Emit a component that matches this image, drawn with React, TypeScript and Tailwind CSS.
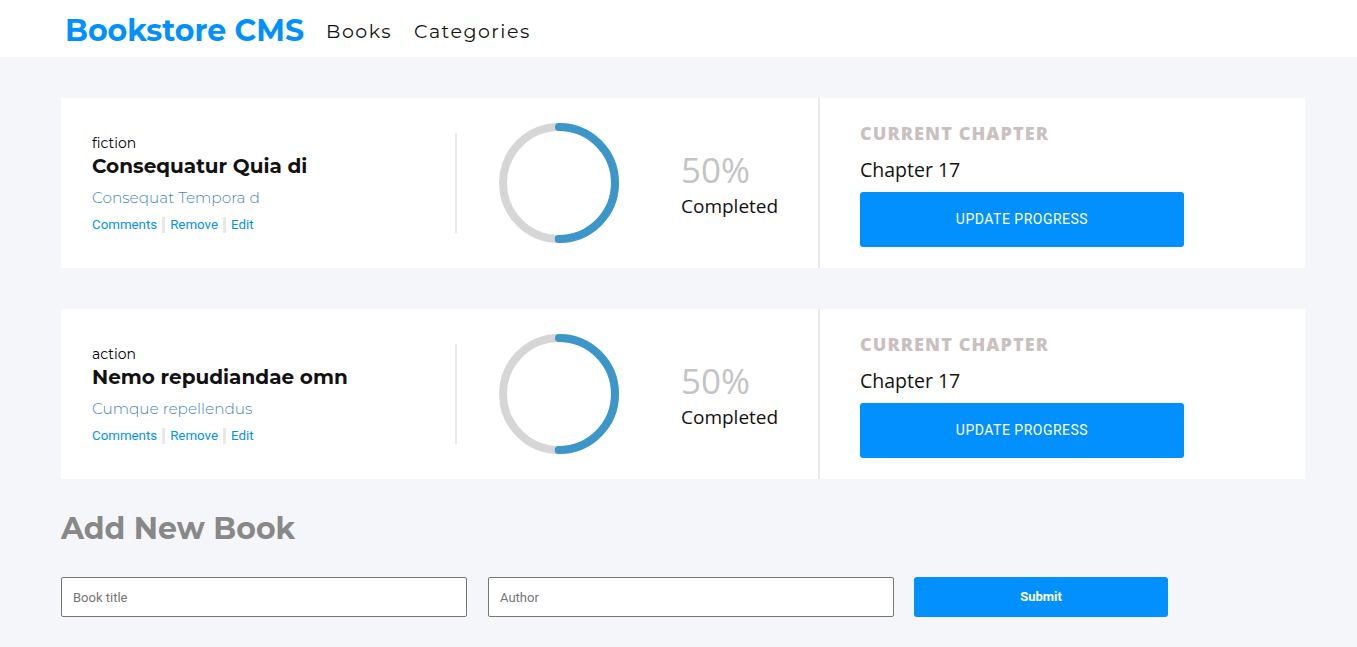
const books = [
  {
    category: 'fiction',
    title: 'Consequatur Quia di',
    author: 'Consequat Tempora d',
    progress: 50,
    chapter: 'Chapter 17',
  },
  {
    category: 'action',
    title: 'Nemo repudiandae omn',
    author: 'Cumque repellendus',
    progress: 50,
    chapter: 'Chapter 17',
  },
];

const mont = "font-['Montserrat','Inter','DejaVu_Sans',sans-serif]";
const segoe = "font-['Segoe_UI','Open_Sans','Noto_Sans',sans-serif]";
const roboto = "font-['Roboto','Liberation_Sans',sans-serif]";

function ProgressRing({ percent }: { percent: number }) {
  const r = 56;
  const c = 2 * Math.PI * r;
  return (
    <svg width="120" height="120" viewBox="0 0 120 120">
      <circle cx="60" cy="60" r={r} fill="none" stroke="#d6d6d6" strokeWidth="8" />
      <circle
        cx="60"
        cy="60"
        r={r}
        fill="none"
        stroke="#3b97c9"
        strokeWidth="8"
        strokeLinecap="round"
        strokeDasharray={`${(c * percent) / 100} ${c}`}
        transform="rotate(-90 60 60)"
      />
    </svg>
  );
}

function BookCard({ book }: { book: (typeof books)[number] }) {
  return (
    <div className="flex h-[170px] w-[1244px] bg-white">
      {/* ── Info ── */}
      <div className="flex w-[396px] items-center">
        <div className="flex-1 pl-[31px] pt-[2px]">
          <p className={`${mont} text-[14px] leading-[17px] text-black`}>{book.category}</p>
          <h2 className={`${mont} mt-[1px] text-[20px] font-bold leading-[26px] text-[#121212]`}>{book.title}</h2>
          <p className={`${mont} mt-[9px] text-[15.3px] font-light leading-[20px] text-[#4386bf]`}>{book.author}</p>
          <div className={`${roboto} mt-[9px] flex items-center text-[13.3px] leading-[16px] text-[#0290ff]`}>
            <span>Comments</span>
            <span className="mx-[5px] h-[16px] w-[3px] bg-[#e8e8e8]" />
            <span>Remove</span>
            <span className="mx-[5px] h-[16px] w-[3px] bg-[#e8e8e8]" />
            <span>Edit</span>
          </div>
        </div>
        <div className="h-[100px] w-[2px] bg-[#e8e8e8]" />
      </div>

      {/* ── Progress ── */}
      <div className="flex w-[361px] items-center pl-[42px]">
        <ProgressRing percent={book.progress} />
        <div className={`${segoe} ml-[62px] pt-[2px]`}>
          <p className="text-[35px] leading-[40px] text-[#c4c4c4]">{book.progress}%</p>
          <p className="mt-[4px] text-[19px] leading-[24px] text-[#121212]">Completed</p>
        </div>
      </div>

      {/* ── Chapter ── */}
      <div className="flex flex-1 flex-col justify-center border-l-2 border-[#e8e8e8] pl-[40px] pt-[2px]">
        <p className={`${segoe} text-[18px] font-extrabold leading-[22px] tracking-[1.1px] text-[#cbc0c0]`}>
          CURRENT CHAPTER
        </p>
        <p className={`${segoe} mt-[13px] text-[19.5px] leading-[26px] text-[#121212]`}>{book.chapter}</p>
        <button
          className={`${roboto} mt-[9px] h-[55px] w-[324px] rounded-[3px] bg-[#0290ff] text-[14px] tracking-[0.5px] text-white`}
        >
          UPDATE PROGRESS
        </button>
      </div>
    </div>
  );
}

export default function App() {
  return (
    <div className="min-h-screen bg-[#f5f6fa]">
      {/* ── Header ── */}
      <header className="flex h-[57px] items-center bg-white pl-[65px] pt-[5px]">
        <h1 className={`${mont} text-[30px] font-bold leading-none text-[#0290ff]`}>Bookstore CMS</h1>
        <nav className={`${mont} ml-[22px] flex gap-[22px] pt-[2px] text-[19px] tracking-[1.5px] text-[#121212]`}>
          <span>Books</span>
          <span>Categories</span>
        </nav>
      </header>

      {/* ── Books ── */}
      <main className="pl-[61px] pt-[41px]">
        <div className="flex flex-col gap-[41px]">
          {books.map((b) => (
            <BookCard key={b.title} book={b} />
          ))}
        </div>

        {/* ── Add Book ── */}
        <h2 className={`${mont} mt-[31px] text-[30px] font-bold leading-[38px] text-[#888888]`}>Add New Book</h2>
        <form className="mt-[29px] flex gap-[21px] pb-[30px]" onSubmit={(e) => e.preventDefault()}>
          <input
            placeholder="Book title"
            className={`${roboto} h-[40px] w-[406px] rounded-[2px] border border-[#767676] bg-white px-[11px] text-[13px] placeholder:text-[#757575]`}
          />
          <input
            placeholder="Author"
            className={`${roboto} h-[40px] w-[406px] rounded-[2px] border border-[#767676] bg-white px-[11px] text-[13px] placeholder:text-[#757575]`}
          />
          <button
            className={`${roboto} -ml-[1px] h-[40px] w-[254px] rounded-[3px] bg-[#0290ff] text-[13px] font-bold text-white`}
          >
            Submit
          </button>
        </form>
      </main>
    </div>
  );
}
